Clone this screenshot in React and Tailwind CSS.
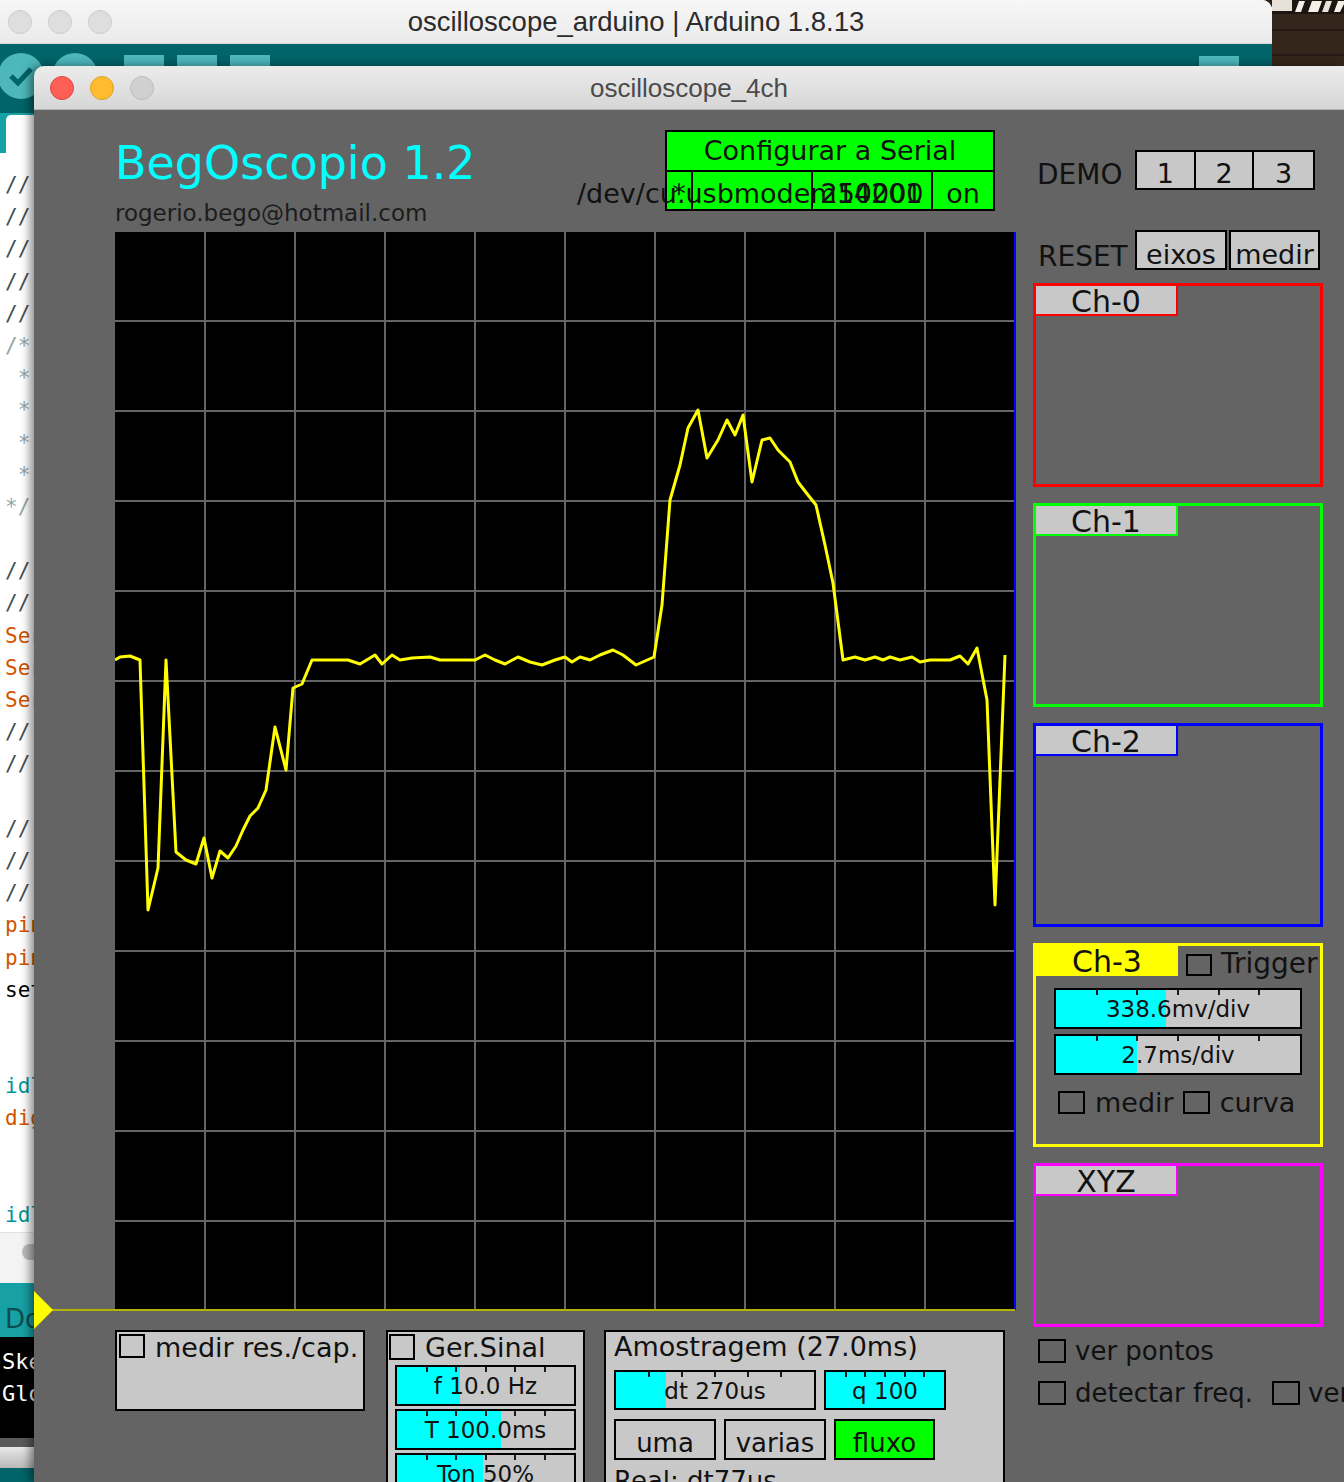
import React from "react";

// trace of the Ch-3 signal, in page pixels (scope origin at 115,232)
const WAVE = [
  [115, 660], [120, 657], [130, 656], [140, 660], [148, 910], [158, 868], [166, 660],
  [176, 852], [186, 860], [196, 864], [204, 838], [212, 878], [220, 851], [228, 858],
  [236, 846], [243, 830], [250, 816], [258, 808], [266, 790], [275, 727], [286, 770],
  [293, 688], [302, 684], [312, 660], [330, 660], [348, 660], [360, 664], [375, 655],
  [382, 664], [392, 655], [400, 660], [412, 658], [430, 657], [440, 660], [460, 660],
  [475, 660], [485, 655], [495, 660], [505, 664], [518, 657], [530, 662], [542, 665],
  [555, 660], [565, 657], [572, 662], [580, 657], [590, 660], [600, 655], [613, 650],
  [623, 655], [636, 665], [654, 657], [662, 605], [670, 500], [680, 465], [688, 428],
  [698, 410], [707, 458], [718, 440], [727, 420], [735, 435], [743, 415], [752, 482],
  [762, 440], [770, 438], [778, 450], [790, 462], [798, 482], [808, 495], [816, 505],
  [825, 545], [833, 583], [843, 660], [855, 657], [865, 660], [875, 657], [883, 660],
  [890, 657], [900, 660], [912, 657], [920, 662], [930, 660], [950, 660], [960, 656],
  [968, 664], [977, 648], [987, 700], [995, 905], [1005, 655],
];
const wavePoints = WAVE.map(([x, y]) => `${x - 115},${y - 232}`).join(" ");

const COMMENT = "text-[#434f54]";
const BLOCK = "text-[#95a5a6]";
const FUNC = "text-[#d35400]";
const KEY = "text-[#00979c]";
const PLAIN = "text-black";

const CODE = [
  ["// Osciloscopio 4 canais", COMMENT],
  ["// BegOscopio 1.2", COMMENT],
  ["// rogerio.bego@hotmail.com", COMMENT],
  ["// Arduino + Processing", COMMENT],
  ["// ------------------------", COMMENT],
  ["/*", BLOCK],
  [" * Ch-0 .. Ch-3 = A0 .. A3", BLOCK],
  [" * gerador de sinal no pino 10", BLOCK],
  [" * medir res./cap. nos pinos 2,3", BLOCK],
  [" * amostragem em fluxo", BLOCK],
  ["*/", BLOCK],
  ["", PLAIN],
  ["// configurar", COMMENT],
  ["// serial", COMMENT],
  ["Serial.begin(115200);", FUNC],
  ["Serial.println();", FUNC],
  ["Serial.flush();", FUNC],
  ["// pinos", COMMENT],
  ["// saidas", COMMENT],
  ["", PLAIN],
  ["// gerador", COMMENT],
  ["// de", COMMENT],
  ["// sinal", COMMENT],
  ["pinMode(10, OUTPUT);", FUNC],
  ["pinMode(2, INPUT);", FUNC],
  ["setTimer();", PLAIN],
  ["", PLAIN],
  ["", PLAIN],
  ["idle();", KEY],
  ["digitalWrite(10, LOW);", FUNC],
  ["", PLAIN],
  ["", PLAIN],
  ["idle();", KEY],
];

function Check({ className }) {
  return <span className={`block shrink-0 border-2 border-black ${className}`} />;
}

function Slider({ size, fill, label }) {
  return (
    <div className={`relative shrink-0 overflow-hidden border-2 border-black bg-[#c8c8c8] ${size}`}>
      <div className="absolute inset-y-0 left-0 bg-[#00ffff]" style={{ width: `${fill}%` }} />
      {[1, 2, 3, 4, 5].map((i) => (
        <span
          key={i}
          className="absolute top-0 h-[5px] w-[2px] -translate-x-1/2 bg-[#1a1a1a]"
          style={{ left: `${(i * 100) / 6}%` }}
        />
      ))}
      <div className="relative flex h-full items-center justify-center pt-[2px] text-[23px] leading-none whitespace-nowrap">
        {label}
      </div>
    </div>
  );
}

function Channel({ name, frame, tab, className = "", children }) {
  return (
    <div className={`w-[290px] shrink-0 border-[3px] ${frame} ${className}`}>
      <div className="flex items-start">
        <span className={`flex h-[30px] w-[142px] shrink-0 justify-center pt-[1px] text-[30px] leading-none ${tab}`}>
          {name}
        </span>
        {children?.[0]}
      </div>
      {children?.[1]}
    </div>
  );
}

function ArduinoWindow() {
  return (
    <div className="absolute left-0 top-0 flex h-[1482px] w-[1272px] flex-col overflow-hidden rounded-tr-[10px] bg-white">
      <div className="relative flex h-[44px] shrink-0 items-center justify-center border-b border-[#d6d6d6] bg-gradient-to-b from-[#f7f7f7] to-[#eaeaea]">
        <div className="absolute left-[8px] top-[10px] flex gap-[16px]">
          {[0, 1, 2].map((i) => (
            <span key={i} className="h-[24px] w-[24px] rounded-full border border-[#cdcdcd] bg-[#dedede]" />
          ))}
        </div>
        <span className="font-['Liberation_Sans',sans-serif] text-[27.5px] leading-none text-[#2b2b2b]">
          oscilloscope_arduino | Arduino 1.8.13
        </span>
      </div>

      <div className="flex h-[69px] shrink-0 items-start bg-[#006468] pr-[33px] pt-[9px]">
        <span className="-ml-[2px] flex h-[46px] w-[46px] items-center justify-center rounded-full bg-[#4db7bb]">
          <svg width="26" height="22" viewBox="0 0 26 22">
            <path d="M3 11 L10 18 L23 4" fill="none" stroke="#006468" strokeWidth="5" />
          </svg>
        </span>
        <span className="ml-[8px] h-[46px] w-[46px] rounded-full bg-[#4db7bb]" />
        <span className="ml-[26px] mt-[2px] h-[40px] w-[40px] bg-[#4db7bb]" />
        <span className="ml-[13px] mt-[2px] h-[40px] w-[40px] bg-[#4db7bb]" />
        <span className="ml-[13px] mt-[2px] h-[40px] w-[40px] bg-[#4db7bb]" />
        <span className="ml-auto mt-[3px] h-[40px] w-[40px] bg-[#4db7bb]" />
      </div>

      <div className="flex h-[40px] shrink-0 items-end bg-[#17a1a5] pl-[6px]">
        <span className="h-[38px] w-[220px] rounded-tl-[5px] bg-white" />
      </div>

      <div className="h-[1079px] shrink-0 bg-white pl-[5px] pt-[16px] font-['DejaVu_Sans_Mono',monospace] text-[21px] leading-[32.2px]">
        {CODE.map(([line, color], i) => (
          <div key={i} className={`h-[32.2px] whitespace-pre ${color}`}>
            {line}
          </div>
        ))}
      </div>

      <div className="h-[51px] shrink-0 border-t border-[#e2e2e2] bg-[#f3f3f3] pl-[22px] pt-[11px]">
        <span className="block h-[16px] w-[40px] rounded-full bg-[#bdbdbd]" />
      </div>
      <div className="flex h-[54px] shrink-0 items-center bg-[#17a1a5] pl-[5px] pt-[18px] text-[26px] leading-none text-[#0b4d51]">
        Done compiling.
      </div>
      <div className="h-[101px] shrink-0 bg-black pl-[2px] pt-[9px] font-['DejaVu_Sans_Mono',monospace] text-[22px] leading-[32px] text-white">
        <div className="whitespace-pre">Sketch uses 7420 bytes (23%)</div>
        <div className="whitespace-pre">Global variables use 652 bytes</div>
      </div>
      <div className="h-[9px] shrink-0 bg-[#5a5a5a]" />
      <div className="h-[21px] shrink-0 bg-gradient-to-b from-[#e8e8e8] to-[#b9b9b9]" />
      <div className="flex-1 bg-[#006468]" />
    </div>
  );
}

function ScopeGrid() {
  return (
    <svg width="902" height="1078" viewBox="0 0 902 1078" className="block shrink-0">
      <rect width="900" height="1078" fill="#000" />
      {[1, 2, 3, 4, 5, 6, 7, 8, 9].map((k) => (
        <rect key={`v${k}`} x={90 * k - 1} y="0" width="2" height="1078" fill="#646464" />
      ))}
      {[1, 2, 3, 4, 5, 6, 7, 8, 9, 10, 11].map((k) => (
        <rect key={`h${k}`} x="0" y={90 * k - 2} width="900" height="2" fill="#646464" />
      ))}
      <polyline points={wavePoints} fill="none" stroke="#ffff00" strokeWidth="3" strokeLinejoin="round" />
      <rect x="899" y="0" width="2" height="1078" fill="#0000ff" />
    </svg>
  );
}

function ScopeWindow() {
  return (
    <div className="absolute left-[34px] top-[66px] flex h-[1416px] w-[1310px] flex-col overflow-hidden rounded-tl-[10px] shadow-[-4px_0_10px_rgba(0,0,0,0.45)]">
      <div className="relative flex h-[44px] shrink-0 items-center justify-center border-b border-[#b3b3b3] bg-gradient-to-b from-[#ececec] to-[#d6d6d6]">
        <div className="absolute left-[16px] top-[10px] flex gap-[16px]">
          <span className="h-[24px] w-[24px] rounded-full border border-[#e0443e] bg-[#fe5f57]" />
          <span className="h-[24px] w-[24px] rounded-full border border-[#dea123] bg-[#febc2e]" />
          <span className="h-[24px] w-[24px] rounded-full border border-[#bdbdbd] bg-[#d0d0d0]" />
        </div>
        <span className="font-['Liberation_Sans',sans-serif] text-[26px] leading-none text-[#4b4b4b]">
          oscilloscope_4ch
        </span>
      </div>

      <div className="relative flex flex-1 bg-[#646464] text-[#111]">
        {/* left: title, scope, bottom controls */}
        <div className="flex w-[983px] shrink-0 flex-col pl-[81px]">
          <div className="relative flex h-[122px] shrink-0 justify-between pr-[22px]">
            <div className="flex flex-col">
              <span className="mt-[30px] whitespace-nowrap text-[46px] leading-none text-[#00ffff]">BegOscopio 1.2</span>
              <span className="mt-[16px] text-[23px] leading-none text-[#1c1c1c]">rogerio.bego@hotmail.com</span>
            </div>
            <div className="mt-[20px] flex h-[81px] w-[330px] flex-col border-2 border-black bg-[#00ff00] text-[27px] leading-none">
              <div className="flex h-[40px] shrink-0 justify-center border-b-2 border-black pt-[5px]">Configurar a Serial</div>
              <div className="flex flex-1 divide-x-2 divide-black">
                <span className="flex w-[26px] justify-center pt-[8px]">*</span>
                <span className="w-[120px]" />
                <span className="flex w-[120px] justify-center pt-[8px]">250000</span>
                <span className="flex flex-1 justify-center pt-[8px]">on</span>
              </div>
            </div>
            <span className="absolute left-[462px] top-[70px] whitespace-nowrap text-[27px] leading-none">
              /dev/cu.usbmodem14201
            </span>
          </div>

          <ScopeGrid />

          <div className="mt-[20px] flex items-start">
            <div className="h-[81px] w-[250px] shrink-0 border-2 border-black bg-[#c8c8c8] pl-[2px] pt-[2px]">
              <div className="flex items-start">
                <Check className="h-[24px] w-[26px]" />
                <span className="ml-[10px] whitespace-nowrap text-[27px] leading-none">medir res./cap.</span>
              </div>
            </div>

            <div className="ml-[21px] h-[200px] w-[199px] shrink-0 border-2 border-black bg-[#c8c8c8] pl-[1px] pt-[2px]">
              <div className="flex items-start">
                <Check className="h-[26px] w-[26px]" />
                <span className="ml-[10px] text-[27px] leading-none">Ger.Sinal</span>
              </div>
              <div className="ml-[6px] mt-[4px] flex flex-col gap-[3px]">
                <Slider size="h-[41px] w-[181px]" fill={35.6} label="f 10.0 Hz" />
                <Slider size="h-[41px] w-[181px]" fill={59} label="T 100.0ms" />
                <Slider size="h-[41px] w-[181px]" fill={48.6} label="Ton 50%" />
              </div>
            </div>

            <div className="ml-[19px] h-[200px] w-[401px] shrink-0 border-2 border-black bg-[#c8c8c8] pl-[8px] pt-[1px]">
              <div className="whitespace-nowrap text-[27px] leading-none">Amostragem (27.0ms)</div>
              <div className="mt-[10px] flex gap-[8px]">
                <Slider size="h-[40px] w-[202px]" fill={25} label="dt 270us" />
                <Slider size="h-[40px] w-[122px]" fill={100} label="q 100" />
              </div>
              <div className="mt-[9px] flex gap-[8px] text-[26px] leading-none">
                <span className="flex h-[41px] w-[102px] items-center justify-center border-2 border-black pt-[6px]">uma</span>
                <span className="flex h-[41px] w-[102px] items-center justify-center border-2 border-black pt-[6px]">varias</span>
                <span className="flex h-[41px] w-[101px] items-center justify-center border-2 border-black bg-[#00ff00] pt-[6px]">fluxo</span>
              </div>
              <div className="mt-[8px] text-[26px] leading-none">Real: dt77us</div>
            </div>
          </div>
        </div>

        {/* right: demo/reset and channel boxes */}
        <div className="ml-[16px] flex w-[311px] shrink-0 flex-col pt-[40px]">
          <div className="flex h-[40px] items-start">
            <span className="mt-[11px] w-[102px] shrink-0 pl-[4px] text-[28px] leading-none">DEMO</span>
            <div className="grid h-[40px] w-[180px] grid-cols-3 divide-x-2 divide-black border-2 border-black bg-[#c8c8c8] text-[27px] leading-none">
              <span className="flex items-center justify-center pt-[6px]">1</span>
              <span className="flex items-center justify-center pt-[6px]">2</span>
              <span className="flex items-center justify-center pt-[6px]">3</span>
            </div>
          </div>

          <div className="mt-[40px] flex h-[40px] items-start">
            <span className="mt-[13px] w-[102px] shrink-0 pl-[5px] text-[28px] leading-none">RESET</span>
            <span className="flex h-[40px] w-[92px] items-center justify-center border-2 border-black bg-[#c8c8c8] pt-[8px] text-[27px] leading-none">eixos</span>
            <span className="ml-[2px] flex h-[40px] w-[91px] items-center justify-center border-2 border-black bg-[#c8c8c8] pt-[8px] text-[27px] leading-none">medir</span>
          </div>

          <Channel name="Ch-0" frame="mt-[13px] h-[204px] border-[#ff0000]" tab="border-b-2 border-r-2 border-[#ff0000] bg-[#c8c8c8]" />
          <Channel name="Ch-1" frame="mt-[16px] h-[204px] border-[#00ff00]" tab="border-b-2 border-r-2 border-[#00ff00] bg-[#c8c8c8]" />
          <Channel name="Ch-2" frame="mt-[16px] h-[204px] border-[#0000ff]" tab="border-b-2 border-r-2 border-[#0000ff] bg-[#c8c8c8]" />
          <Channel name="Ch-3" frame="mt-[16px] h-[204px] border-[#ffff00]" tab="bg-[#ffff00]">
            {[
              <React.Fragment key="trig">
                <Check className="ml-[8px] mt-[8px] h-[22px] w-[26px]" />
                <span className="ml-[9px] mt-[4px] whitespace-nowrap text-[28px] leading-none">Trigger</span>
              </React.Fragment>,
              <div key="body">
                <div className="ml-[18px] mt-[10px] flex flex-col gap-[5px]">
                  <Slider size="h-[41px] w-[248px]" fill={45} label="338.6mv/div" />
                  <Slider size="h-[41px] w-[248px]" fill={33} label="2.7ms/div" />
                </div>
                <div className="ml-[22px] mt-[14px] flex items-center text-[27px] leading-none">
                  <Check className="h-[23px] w-[27px]" />
                  <span className="ml-[10px]">medir</span>
                  <Check className="ml-[9px] h-[23px] w-[27px]" />
                  <span className="ml-[10px]">curva</span>
                </div>
              </div>,
            ]}
          </Channel>
          <Channel name="XYZ" frame="mt-[16px] h-[164px] border-[#ff00ff]" tab="border-b-2 border-r-2 border-[#ff00ff] bg-[#c8c8c8]" />

          <div className="mt-[11px] flex items-center pl-[5px] text-[26px] leading-none">
            <Check className="h-[24px] w-[28px]" />
            <span className="ml-[9px]">ver pontos</span>
          </div>
          <div className="mt-[16px] flex items-center whitespace-nowrap pl-[5px] text-[26px] leading-none">
            <Check className="h-[24px] w-[28px]" />
            <span className="ml-[9px]">detectar freq.</span>
            <Check className="ml-[19px] h-[24px] w-[28px]" />
            <span className="ml-[8px]">ver</span>
          </div>
        </div>

        {/* trigger level marker at the foot of the scope */}
        <div className="absolute left-0 top-[1199px] h-[2px] w-[981px] bg-[#b4b400]" />
        <svg className="absolute left-0 top-[1181px]" width="20" height="38" viewBox="0 0 20 38">
          <polygon points="0,0 19,19 0,38" fill="#ffff00" />
        </svg>
      </div>
    </div>
  );
}

export default function App() {
  return (
    <div className="relative h-[1482px] w-[1344px] overflow-hidden bg-[#2e2118] font-['DejaVu_Sans',sans-serif]">
      <svg className="absolute right-0 top-0" width="72" height="66" viewBox="0 0 72 66">
        <rect width="72" height="66" fill="#35261b" />
        <rect y="0" width="72" height="14" fill="#1d1510" />
        <polygon points="0,0 20,0 20,11 0,11" fill="#e6e0d6" />
        <polygon points="27,1 33,1 29,12 23,12" fill="#f2efe8" />
        <polygon points="40,1 50,1 46,12 36,12" fill="#f2efe8" />
        <polygon points="54,1 60,1 56,12 50,12" fill="#e9e4db" />
        <polygon points="66,1 72,1 72,4 68,12 62,12" fill="#f2efe8" />
        <rect y="29" width="72" height="2" fill="#241912" />
        <rect y="54" width="72" height="2" fill="#241912" />
      </svg>
      <ArduinoWindow />
      <ScopeWindow />
    </div>
  );
}
